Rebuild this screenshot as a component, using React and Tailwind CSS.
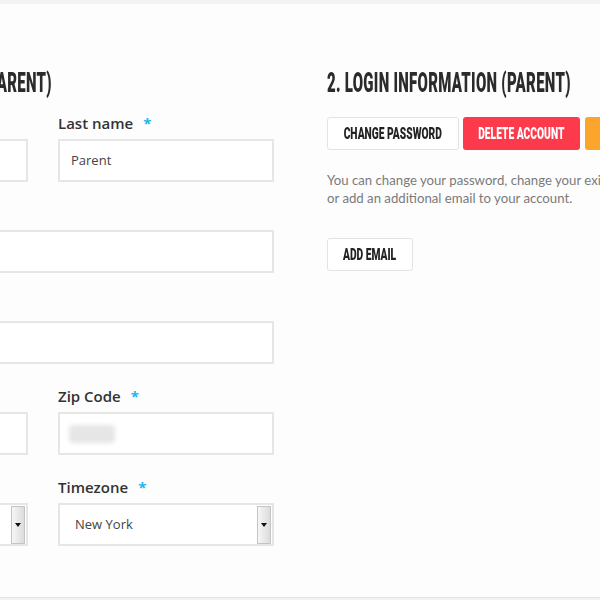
import React from "react";

const cond = { fontFamily: "Roboto, 'Liberation Sans', sans-serif" };

function Label({ children, req = true }) {
  return (
    <div className="h-5 mb-[6px] flex items-center text-[15px] font-semibold text-[#333] leading-5 whitespace-nowrap" style={{ fontFamily: "'Open Sans', sans-serif" }}>
      {children}
      {req && <span className="ml-[10px] text-[#1fb6ee] text-[15px] font-bold">*</span>}
    </div>
  );
}

function Input({ value, blur }) {
  return (
    <div className="h-[43px] border-2 border-[#e6e6e6] bg-white flex items-center px-[11px] text-[13px] text-[#444]" style={{ fontFamily: "'Open Sans', sans-serif" }}>
      {blur ? <div className="ml-[-2px] w-[46px] h-[18px] bg-[#e6e6e6] blur-[2px] rounded-sm"></div> : value}
    </div>
  );
}

function Select({ value }) {
  return (
    <div className="h-[43px] border-2 border-[#e6e6e6] bg-white flex items-center pl-[15px] pr-[1px] text-[13px] text-[#444]" style={{ fontFamily: "'Open Sans', sans-serif" }}>
      <span className="flex-1">{value}</span>
      <div className="w-[14px] h-[38px] border border-[#c4c4c4] bg-gradient-to-r from-[#f6f6f6] to-[#dcdcdc] flex items-center justify-center">
        <svg width="6" height="4" viewBox="0 0 6 4"><path d="M0 0h6L3 4z" fill="#111" /></svg>
      </div>
    </div>
  );
}

function Row({ children }) {
  return <div className="mb-[22px]">{children}</div>;
}

function Heading({ children }) {
  return (
    <div className="h-[30px] whitespace-nowrap">
      <span className="inline-block origin-left scale-x-[0.555] text-[27px] leading-[30px] font-black text-[#2b2b2b] tracking-[0.5px]" style={cond}>
        {children}
      </span>
    </div>
  );
}

function Btn({ children, className, w }) {
  return (
    <div className={`h-[33px] rounded-[3px] flex items-center justify-center whitespace-nowrap ${className}`} style={{ width: w }}>
      <span className="inline-block scale-x-[0.64] text-[16px] font-black" style={cond}>{children}</span>
    </div>
  );
}

export default function App() {
  return (
    <div className="w-[600px] h-[600px] overflow-hidden bg-[#fdfdfd] flex flex-col">
      <div className="h-[4px] bg-[#f3f3f3] shrink-0"></div>
      <div className="flex-1 flex ml-[-188px] pt-[64px]">
        <div className="w-[462px] shrink-0">
          <div className="ml-[-38px]">
            <Heading>1. PERSONAL INFORMATION (PARENT)</Heading>
          </div>
          <div className="mt-[15px] grid grid-cols-2 gap-x-[30px]">
            <Row><Label>First name</Label><Input value="" /></Row>
            <Row><Label>Last name</Label><Input value="Parent" /></Row>
          </div>
          <Row><Label>Address</Label><Input value="" /></Row>
          <Row><Label>City</Label><Input value="" /></Row>
          <div className="grid grid-cols-2 gap-x-[30px]">
            <Row><Label>State</Label><Input value="" /></Row>
            <Row><Label>Zip Code</Label><Input blur /></Row>
            <Row><Label>Country</Label><Select value="United States" /></Row>
            <Row><Label>Timezone</Label><Select value="New York" /></Row>
          </div>
        </div>
        <div className="ml-[53px] w-[460px] shrink-0">
          <Heading>2. LOGIN INFORMATION (PARENT)</Heading>
          <div className="mt-[19px] flex gap-[4px]">
            <Btn w="132px" className="border border-[#e3e3e3] bg-white text-[#222]">CHANGE PASSWORD</Btn>
            <Btn w="117px" className="bg-[#fc3a4b] text-white">DELETE ACCOUNT</Btn>
            <Btn w="130px" className="bg-[#fba52d] text-white ml-[1px]">CHANGE EMAIL</Btn>
          </div>
          <p className="mt-[21px] text-[13.2px] leading-[18px] text-[#7a7a7a] w-[440px]" style={{ fontFamily: "Lato, sans-serif" }}>
            You can change your password, change your existing email address
            <br />
            or add an additional email to your account.
          </p>
          <div className="mt-[31px]">
            <Btn w="86px" className="border border-[#e3e3e3] bg-white text-[#222]">ADD EMAIL</Btn>
          </div>
        </div>
      </div>
      <div className="h-[3px] border-t border-[#e2e2e2] bg-[#f3f3f3] shrink-0"></div>
    </div>
  );
}
